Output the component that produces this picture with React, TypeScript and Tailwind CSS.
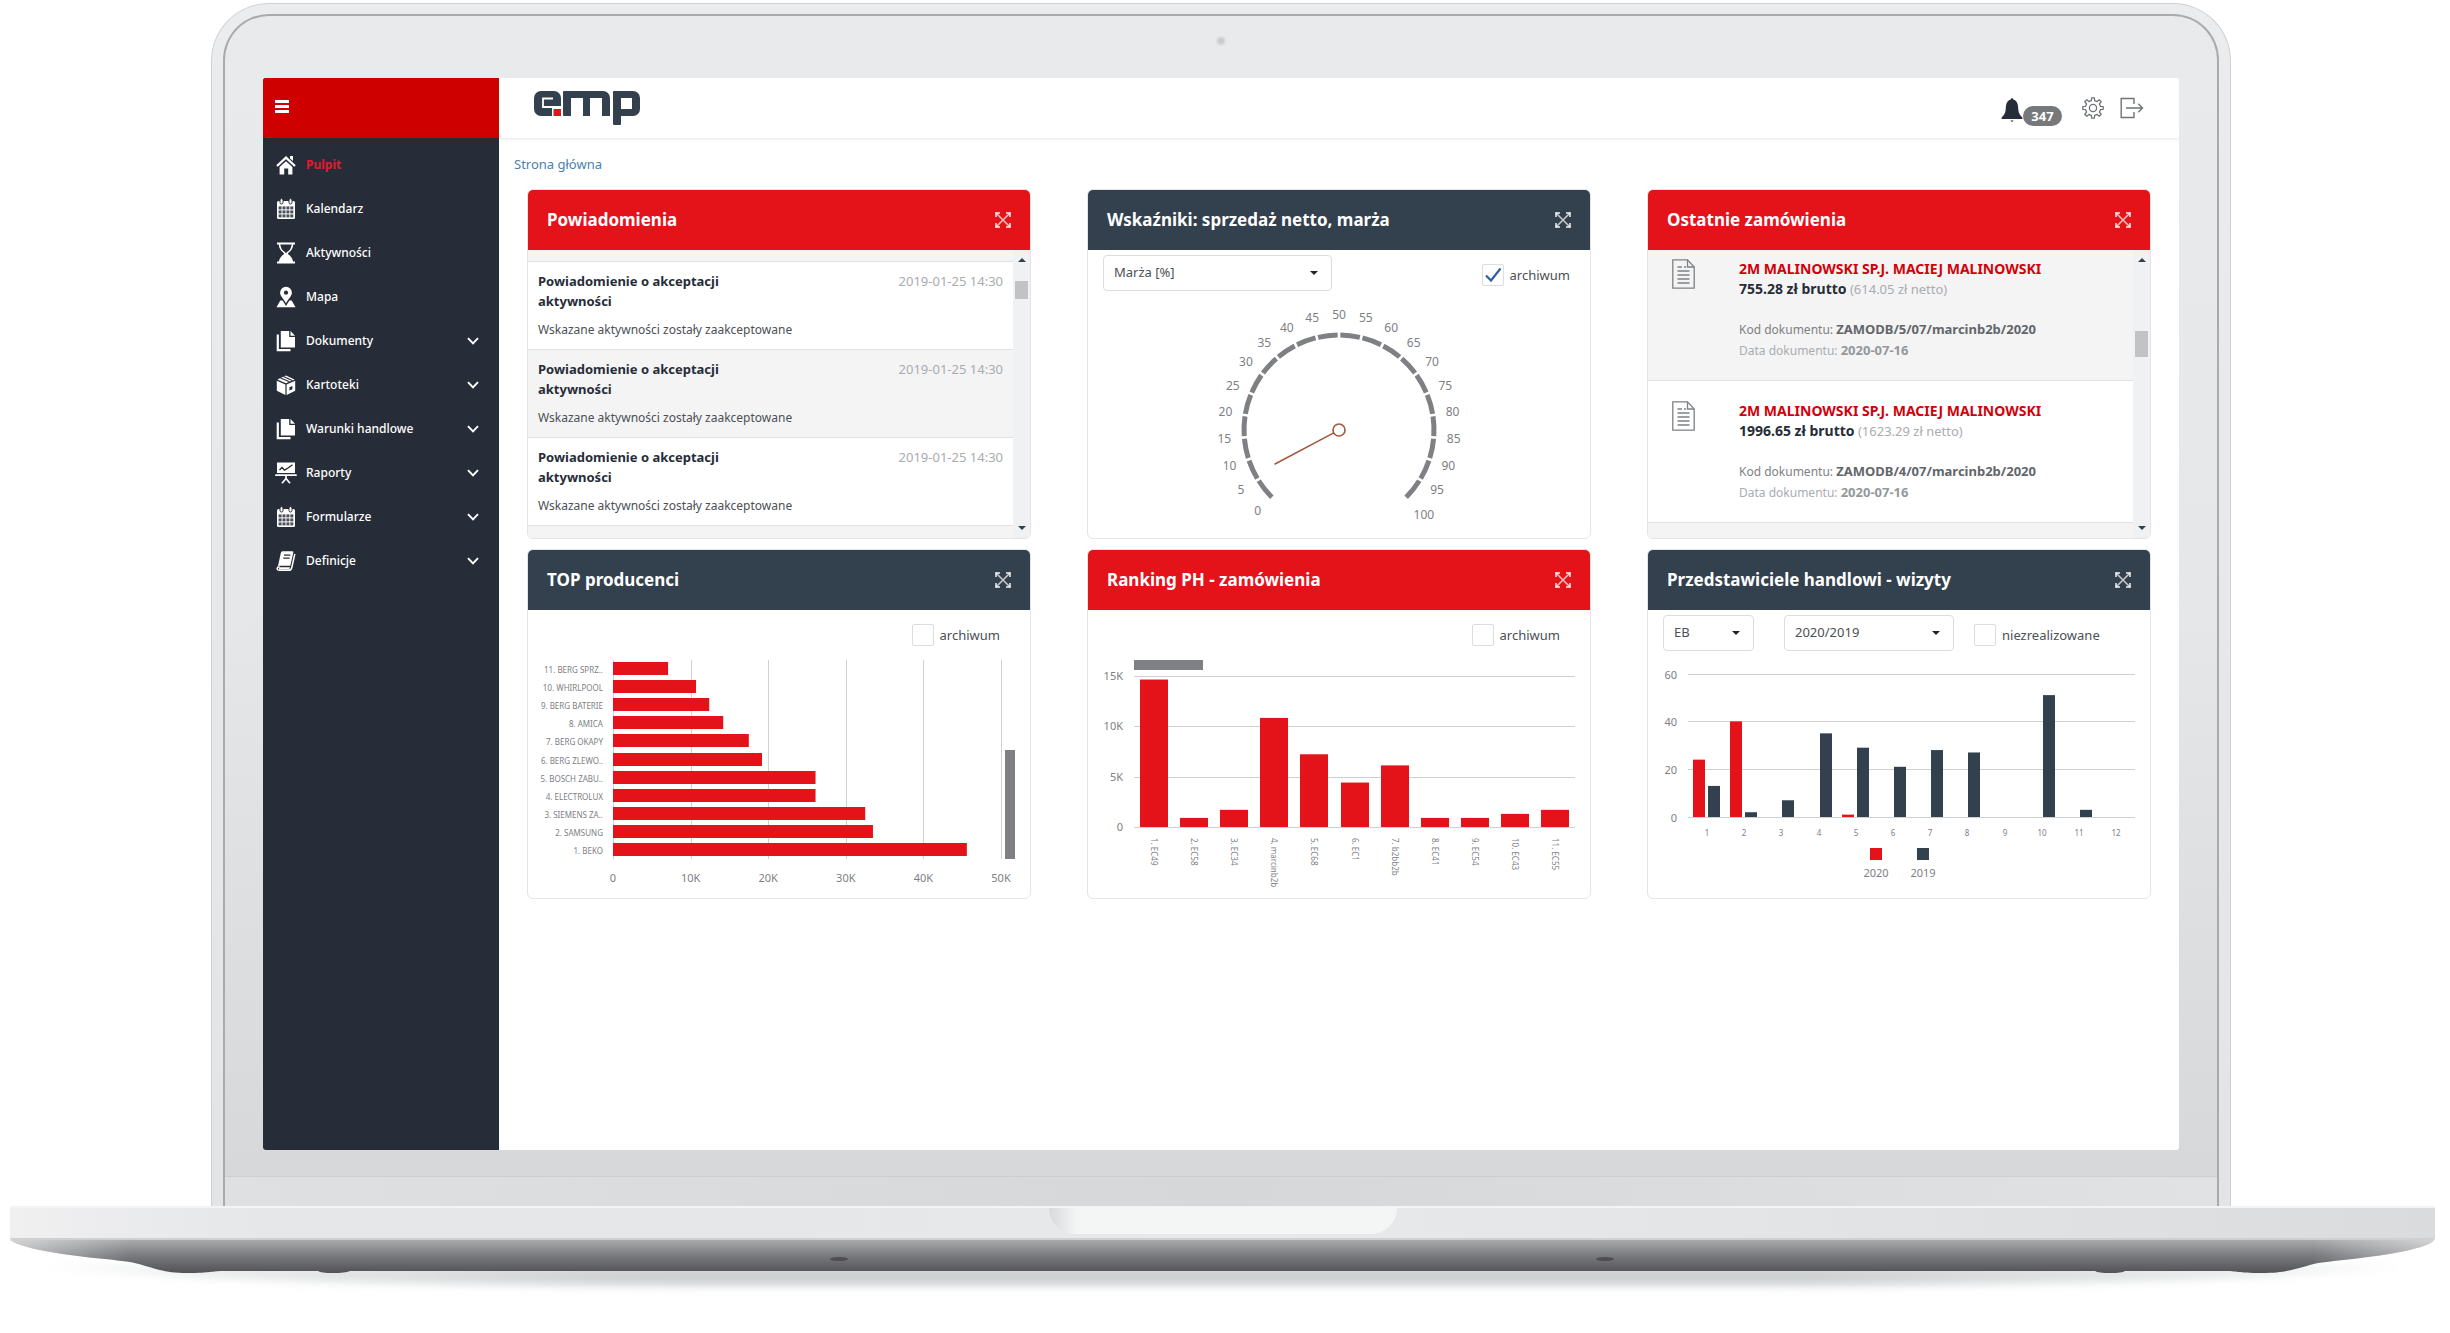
import React, { useState } from "react";

/* ---------- icons ---------- */

function HomeIcon() {
  return (
    <svg viewBox="0 0 20 20" className="size-5" aria-hidden="true">
      <path d="M14 1h3v5l-3-2.6z" fill="#fff" />
      <path d="M1 11L10 2.6L19 11" fill="none" stroke="#fff" strokeWidth="2.2" />
      <path d="M3.6 12L10 6.2L16.4 12V19.5H12.2V13.6H8.2V19.5H3.6Z" fill="#fff" />
    </svg>
  );
}

function CalendarIcon() {
  return (
    <svg viewBox="0 0 20 22" className="h-[22px] w-5" aria-hidden="true">
      <rect x="1" y="3" width="18" height="18" rx="1.5" fill="#fff" />
      <g fill="#fff" stroke="#272d38">
        <rect x="4" y="0.6" width="3" height="5.4" rx="1.5" />
        <rect x="13" y="0.6" width="3" height="5.4" rx="1.5" />
      </g>
      <g fill="#4a505b">
        {[8.4, 12.4, 16.4].map((y) =>
          [2.6, 6.5, 10.4, 14.3].map((x) => <rect key={`${x}-${y}`} x={x} y={y} width="3" height="3" />)
        )}
      </g>
    </svg>
  );
}

function HourglassIcon() {
  return (
    <svg viewBox="0 0 20 22" className="h-[22px] w-5" aria-hidden="true">
      <path d="M1 1.5H19M1 20.5H19" stroke="#fff" strokeWidth="2" />
      <path d="M3.5 2C3.8 7 5.2 8.6 8.2 10.4C9 11 9 11.4 8.2 12M16.5 2C16.2 7 14.8 8.6 11.8 10.4C11 11 11 11.4 11.8 12" fill="none" stroke="#fff" strokeWidth="1.6" />
      <path d="M9 11H11C11.4 12.6 16.4 13.5 17.2 20.5H2.8C3.6 13.5 8.6 12.6 9 11Z" fill="#fff" />
    </svg>
  );
}

function MapPinIcon() {
  return (
    <svg viewBox="0 0 20 22" className="h-[22px] w-5" aria-hidden="true">
      <path fillRule="evenodd" d="M10 .8a5.9 5.9 0 0 1 5.9 5.9C15.9 10 12 13 10 17.4C8 13 4.1 10 4.1 6.7A5.9 5.9 0 0 1 10 .8ZM10 4.6a2.1 2.1 0 1 0 0 4.2a2.1 2.1 0 0 0 0-4.2Z" fill="#fff" />
      <path d="M4.3 14.5L6.6 14.5L10 20L13.4 14.5H15.7L19.5 21.2H.5Z" fill="#fff" />
    </svg>
  );
}

function DocumentsIcon() {
  return (
    <svg viewBox="0 0 20 22" className="h-[22px] w-5" aria-hidden="true">
      <path d="M1.8 4.5V20.2H14.5" fill="none" stroke="#fff" strokeWidth="2.2" />
      <path d="M4.8 1H13.2V7H19V17.6H4.8Z" fill="#fff" />
      <path d="M14.5 1L19 5.7H14.5Z" fill="#fff" />
    </svg>
  );
}

function BoxIcon() {
  return (
    <svg viewBox="0 0 20 22" className="h-[22px] w-5" aria-hidden="true">
      <path d="M.8 6.8L9.4 10.4V21L.8 16.8Z" fill="#fff" />
      <path fillRule="evenodd" d="M10.6 10.4L19.2 6.8V16.8L10.6 21ZM13.4 13.3V16.6L16.4 15.2V12Z" fill="#fff" />
      <path d="M1.4 5.6L10 1.4L18.6 5.6L10 9.2Z" fill="#fff" />
      <path d="M4.6 4L13.5 7.8M7.5 2.6L16.2 6.6" stroke="#272d38" strokeWidth="1.1" />
    </svg>
  );
}

function BoardIcon() {
  return (
    <svg viewBox="0 0 22 22" className="-mx-px h-[22px] w-[22px]" aria-hidden="true">
      <path d="M2 0.5H20V11H2Z" fill="#fff" />
      <path d="M4.5 8L7 5.5L9.5 8.2L13 6L17.5 2.8" fill="none" stroke="#272d38" strokeWidth="1.4" />
      <path d="M1 13.2H21" stroke="#fff" strokeWidth="1.8" strokeLinecap="round" />
      <path d="M11 13V17.5M11 16.5L7 21.2M11 16.5L15 21.2" stroke="#fff" strokeWidth="1.7" />
    </svg>
  );
}

function BookIcon() {
  return (
    <svg viewBox="0 0 20 22" className="h-[22px] w-5" aria-hidden="true">
      <path d="M6.5 1.2H16.2Q17.6 1.2 17.3 2.6L14.3 15.8H4Q2.3 15.8 1.8 17L4.8 3Q5.2 1.2 6.5 1.2Z" fill="#fff" />
      <path d="M18.8 4L15.8 17.5Q15.2 20.3 13 20.3H3.5Q1 20.3 1.2 18.2Q1.5 16.8 3.5 16.8" fill="none" stroke="#fff" strokeWidth="1.5" />
      <path d="M3 17.2H14L13.3 19.5H3Z" fill="#fff" />
      <path d="M8 5.2H14.4M7.3 8.2H13.7" stroke="#272d38" strokeWidth="1.2" />
    </svg>
  );
}

function ChevronIcon() {
  return (
    <svg viewBox="0 0 12 8" className="h-2 w-3" aria-hidden="true">
      <path d="M1 1.2L6 6.4L11 1.2" fill="none" stroke="#fff" strokeWidth="1.9" />
    </svg>
  );
}

function ExpandIcon() {
  return (
    <svg viewBox="0 0 16 16" className="size-4" aria-hidden="true">
      <path d="M1 1L15 15M15 1L1 15" stroke="currentColor" strokeWidth="1.6" />
      <path d="M1 5V1H5M11 1H15V5M15 11V15H11M5 15H1V11" fill="none" stroke="currentColor" strokeWidth="2" />
    </svg>
  );
}

function BellIcon() {
  return (
    <svg viewBox="0 0 22 24" className="h-6 w-[22px]" aria-hidden="true">
      <path d="M11 0Q12 0 12.3 1.5C16.2 2.8 17 6 17.2 10C17.4 14.5 18.4 16.5 21.5 19.8Q22 21 20.5 21H1.5Q0 21 .5 19.8C3.6 16.5 4.6 14.5 4.8 10C5 6 5.800 2.8 9.7 1.5Q10 0 11 0Z" fill="#272d38" />
      <path d="M9.3 22.4H12.7L11 24Z" fill="#272d38" />
    </svg>
  );
}

function gearOutline(teeth: number, inner: number, outer: number, c: number) {
  const step = (2 * Math.PI) / teeth;
  const at = (r: number, a: number) => `${(c + r * Math.cos(a)).toFixed(2)} ${(c + r * Math.sin(a)).toFixed(2)}`;
  const points: string[] = [];
  for (let i = 0; i < teeth; i++) {
    const a = i * step - Math.PI / 2;
    points.push(at(inner, a - step * 0.28), at(outer, a - step * 0.17), at(outer, a + step * 0.17), at(inner, a + step * 0.28));
  }
  return `M${points.join("L")}Z`;
}

function GearIcon() {
  return (
    <svg viewBox="0 0 22 22" className="size-[22px]" fill="none" stroke="#6f7377" strokeWidth="1.3" strokeLinejoin="round" aria-hidden="true">
      <path d={gearOutline(8, 7.6, 10.3, 11)} />
      <circle cx="11" cy="11" r="3.6" />
    </svg>
  );
}

function LogoutIcon() {
  return (
    <svg viewBox="0 0 24 22" className="h-[22px] w-6" fill="none" stroke="#6f7377" strokeWidth="1.4" aria-hidden="true">
      <path d="M14 7V1.5H1.2V20.5H14V15" />
      <path d="M6 11H22.5M18.3 6.8L22.5 11L18.3 15.2" />
    </svg>
  );
}

function DocumentIcon() {
  return (
    <svg viewBox="0 0 23 30" className="h-[30px] w-[23px]" fill="none" stroke="#7d8084" strokeWidth="1.3" aria-hidden="true">
      <path d="M.8 .8H15.5L22.2 8V29.2H.8Z" />
      <path d="M15.5 .8V8H22.2" />
      <path d="M5.5 8H10M12 8H14M5.5 12H17.5M5.5 16H17.5M5.5 20H17.5M5.5 24H17.5" />
    </svg>
  );
}

function Logo() {
  return (
    <svg viewBox="0 0 106 34" className="h-[34px] w-[106px]" role="img" aria-label="emp">
      <g fill="#33404e">
        <rect width="27" height="25" rx="7" />
        <rect x="29" width="47" height="25" rx="7" />
        <rect x="29" width="8" height="25" rx="1" />
        <rect x="68" y="12" width="8" height="13" />
        <rect x="79" width="27" height="25" rx="7" />
        <rect x="79" width="8" height="34" rx="1" />
      </g>
      <g fill="#fff">
        <rect x="37" y="7" width="12" height="18" />
        <rect x="56" y="7" width="12" height="18" />
        <rect x="87" y="7" width="11" height="11" />
        <rect x="18" y="16" width="10" height="9" />
      </g>
      <path d="M19 7.5H9V16H27" fill="none" stroke="#fff" strokeWidth="1.8" />
      <rect x="19.5" y="18" width="7.5" height="7" fill="#e4131a" />
    </svg>
  );
}

/* ---------- form controls ---------- */

function CheckBox({ label, defaultChecked = false }: { label: string; defaultChecked?: boolean }) {
  return (
    <label className="flex items-center gap-1.5 text-[13px] leading-5 text-[#4b5056]">
      <span className="relative flex">
        <input type="checkbox" defaultChecked={defaultChecked} className="peer size-[22px] appearance-none rounded-xs border border-[#dcdddf] bg-white" />
        <svg viewBox="0 0 22 22" className="pointer-events-none absolute inset-0 hidden size-[22px] peer-checked:block" aria-hidden="true">
          <path d="M4 11.5L9 16.5L18.5 4.5" fill="none" stroke="#2f62a3" strokeWidth="2.2" />
        </svg>
      </span>
      {label}
    </label>
  );
}

function Select({ label, options, className }: { label: string; options: string[]; className: string }) {
  return (
    <span className={`relative flex ${className}`}>
      <select aria-label={label} className="h-9 w-full appearance-none rounded-sm border border-[#dcdddf] bg-white pr-8 pl-2.5 text-[13px] text-[#4b5056]">
        {options.map((o) => (
          <option key={o}>{o}</option>
        ))}
      </select>
      <svg viewBox="0 0 8 4" className="pointer-events-none absolute top-4 right-3.5 h-1 w-2" aria-hidden="true">
        <path d="M0 0H8L4 4Z" fill="#1f242c" />
      </svg>
    </span>
  );
}

/* ---------- cards ---------- */

function Card({ title, tone, children }: { title: string; tone: "red" | "navy"; children: React.ReactNode }) {
  return (
    <section className="flex h-[350px] flex-col overflow-hidden rounded-md border border-[#e3e4e6] bg-white">
      <header className={`-mx-px -mt-px flex h-[61px] shrink-0 items-center justify-between pr-5 pl-5 text-white ${tone === "red" ? "bg-[#e4131a]" : "bg-[#33404e]"}`}>
        <h2 className="text-[17px] leading-6 font-bold">{title}</h2>
        <button type="button" aria-label={`Powiększ: ${title}`} className="text-white/70">
          <ExpandIcon />
        </button>
      </header>
      {children}
    </section>
  );
}

function ScrollTrack({ thumb }: { thumb: string }) {
  return (
    <div className="flex w-[17px] shrink-0 flex-col items-center bg-[#f0f1f2] py-2" aria-hidden="true">
      <svg viewBox="0 0 8 4" className="h-1 w-2"><path d="M4 0L8 4H0Z" fill="#33404e" /></svg>
      <div className={`w-[13px] bg-[#c2c3c5] ${thumb}`} />
      <svg viewBox="0 0 8 4" className="mt-auto h-1 w-2"><path d="M0 0H8L4 4Z" fill="#33404e" /></svg>
    </div>
  );
}

function Notifications() {
  return (
    <div className="flex min-h-0 flex-1">
      <div className="flex flex-1 flex-col bg-[#f4f4f4] pt-[11px]">
        <ul>
          {[0, 1, 2].map((i) => (
            <li key={i} className={`h-[88px] border-t border-[#dfe0e1] px-2.5 pt-[9px] ${i % 2 ? "bg-[#f4f4f4]" : "bg-white"}`}>
              <div className="flex items-start justify-between leading-5">
                <h3 className="w-[230px] text-[13px] leading-5 font-bold text-[#272d38]">Powiadomienie o akceptacji aktywności</h3>
                <time className="text-[13px] text-[#a9acb0]">2019-01-25 14:30</time>
              </div>
              <p className="mt-[9px] text-xs leading-5 text-[#4b5056]">Wskazane aktywności zostały zaakceptowane</p>
            </li>
          ))}
        </ul>
        <div className="flex-1 border-t border-[#dfe0e1]" />
      </div>
      <ScrollTrack thumb="mt-[19px] h-[18px]" />
    </div>
  );
}

const orders = [
  { gross: "755.28", net: "614.05", code: "ZAMODB/5/07/marcinb2b/2020" },
  { gross: "1996.65", net: "1623.29", code: "ZAMODB/4/07/marcinb2b/2020" },
];

function Orders() {
  return (
    <div className="flex min-h-0 flex-1">
      <div className="flex flex-1 flex-col overflow-hidden bg-[#f4f4f4]">
        <ul className="-mt-[11px] shrink-0">
          {orders.map((o, i) => (
            <li key={o.code} className={`flex h-[142px] items-start border-b border-[#dfe0e1] pt-5 pl-6 ${i % 2 ? "bg-white" : "bg-[#f4f4f4]"}`}>
              <DocumentIcon />
              <div className="ml-11 text-xs leading-5">
                <p className="text-sm leading-5 font-bold text-[#d3000a]">2M MALINOWSKI SP.J. MACIEJ MALINOWSKI</p>
                <p className="text-[13px] leading-5 text-[#a9acb0]">
                  <b className="text-sm leading-5 text-[#272d38]">{o.gross} zł brutto</b> ({o.net} zł netto)
                </p>
                <p className="mt-5 text-[#7d8084]">Kod dokumentu: <b className="text-[13px] leading-5 text-[#62666b]">{o.code}</b></p>
                <p className="text-[#a9acb0]">Data dokumentu: <b className="text-[13px] leading-5 text-[#94989c]">2020-07-16</b></p>
              </div>
            </li>
          ))}
        </ul>
      </div>
      <ScrollTrack thumb="mt-[69px] h-[26px]" />
    </div>
  );
}

function Gauge() {
  const cx = 251;
  const cy = 139;
  const point = (value: number, r: number) => {
    const a = ((135 + value * 2.7) * Math.PI) / 180;
    return [cx + r * Math.cos(a), cy + r * Math.sin(a)];
  };
  const segments = Array.from({ length: 20 }, (_, i) => i * 5);
  const [nx, ny] = point(6.3, 73);
  const [sx, sy] = point(6.3, 6);
  return (
    <svg viewBox="0 0 502 247" className="w-full" role="img" aria-label="Marża [%]">
      {segments.map((v) => {
        const [x1, y1] = point(v === 0 ? 0 : v + 0.3, 95);
        const [x2, y2] = point(v === 95 ? 100 : v + 4.7, 95);
        return <path key={v} d={`M${x1} ${y1}A95 95 0 0 1 ${x2} ${y2}`} fill="none" stroke="#7f8084" strokeWidth="5" />;
      })}
      <g fontSize="12" fill="#7d8084" textAnchor="middle">
        {[...segments, 100].map((v) => {
          const [x, y] = point(v, v === 100 ? 120 : 115);
          return <text key={v} x={x} y={y + 4}>{v}</text>;
        })}
      </g>
      <path d={`M${sx} ${sy}L${nx} ${ny}`} stroke="#a5563b" strokeWidth="1.5" />
      <circle cx={cx} cy={cy} r="6" fill="#fff" stroke="#a5563b" strokeWidth="1.6" />
    </svg>
  );
}

const producers: [string, number][] = [
  ["11. BERG SPRZ..", 7.1],
  ["10. WHIRLPOOL", 10.7],
  ["9. BERG BATERIE", 12.4],
  ["8. AMICA", 14.2],
  ["7. BERG OKAPY", 17.5],
  ["6. BERG ZLEWO..", 19.2],
  ["5. BOSCH ZABU..", 26.1],
  ["4. ELECTROLUX", 26.1],
  ["3. SIEMENS ZA..", 32.5],
  ["2. SAMSUNG", 33.5],
  ["1. BEKO", 45.6],
];

function ProducersChart() {
  return (
    <svg viewBox="0 0 502 247" className="w-full" role="img" aria-label="TOP producenci">
      {[0, 10, 20, 30, 40, 50].map((v) => (
        <g key={v}>
          <rect x={Math.round(85 + v * 7.76)} y="9" width="1" height="199" fill="#cfd0d2" />
          <text x={85 + v * 7.76} y="231" fontSize="11" fill="#7d8084" textAnchor="middle">{v === 0 ? "0" : `${v}K`}</text>
        </g>
      ))}
      {producers.map(([name, v], i) => (
        <g key={name}>
          <rect x="85" y={Math.round(11 + i * 18.1)} width={v * 7.76} height="13" fill="#e4131a" />
          <text x="75" y={Math.round(22 + i * 18.1)} fontSize="8" fill="#7d8084" textAnchor="end">{name}</text>
        </g>
      ))}
      <rect x="477" y="99" width="10" height="109" fill="#7f8084" />
    </svg>
  );
}

const ranking: [string, number][] = [
  ["1. EC49", 14.6],
  ["2. EC58", 0.9],
  ["3. EC34", 1.7],
  ["4. marcinb2b", 10.8],
  ["5. EC68", 7.2],
  ["6. EC1", 4.4],
  ["7. b2bb2b", 6.1],
  ["8. EC41", 0.9],
  ["9. EC54", 0.9],
  ["10. EC43", 1.3],
  ["11. EC55", 1.7],
];

function RankingChart() {
  return (
    <svg viewBox="0 0 502 247" className="w-full" role="img" aria-label="Ranking PH - zamówienia">
      {[0, 5, 10, 15].map((v) => (
        <g key={v}>
          <rect x="46" y={Math.round(176 - v * 10.1)} width="441" height="1" fill="#cfd0d2" />
          <text x="35" y={Math.round(180 - v * 10.1)} fontSize="11" fill="#7d8084" textAnchor="end">{v === 0 ? "0" : `${v}K`}</text>
        </g>
      ))}
      <rect x="46" y="9" width="69" height="10" fill="#7f8084" />
      {ranking.map(([name, v], i) => {
        const x = Math.round(52 + i * 40.1);
        return (
          <g key={name}>
            <rect x={x} y={176 - v * 10.1} width="28" height={v * 10.1} fill="#e4131a" />
            <text transform={`translate(${x + 11} 187) rotate(90)`} fontSize="8" fill="#7d8084">{name}</text>
          </g>
        );
      })}
    </svg>
  );
}

const visits: [number, number][] = [
  [24, 13], [40, 2], [0, 7], [0, 35], [1, 29], [0, 21], [0, 28], [0, 27], [0, 0], [0, 51], [0, 3], [0, 0],
];

function VisitsChart() {
  return (
    <svg viewBox="0 0 502 247" className="w-full" role="img" aria-label="Przedstawiciele handlowi - wizyty">
      {[0, 20, 40, 60].map((v) => (
        <g key={v}>
          <rect x="40" y={Math.round(166 - v * 2.39)} width="447" height="1" fill="#cfd0d2" />
          <text x="29" y={Math.round(171 - v * 2.39)} fontSize="11" fill="#7d8084" textAnchor="end">{v}</text>
        </g>
      ))}
      {visits.map(([current, previous], i) => {
        const x = Math.round(45 + i * 37.2);
        return (
          <g key={i}>
            <rect x={x} y={166 - current * 2.39} width="12" height={current * 2.39} fill="#e4131a" />
            <rect x={x + 15} y={166 - previous * 2.39} width="12" height={previous * 2.39} fill="#33404e" />
            <text x={x + 14} y="185" fontSize="8" fill="#7d8084" textAnchor="middle">{i + 1}</text>
          </g>
        );
      })}
      <rect x="222" y="197" width="12" height="12" fill="#e4131a" />
      <rect x="269" y="197" width="12" height="12" fill="#33404e" />
      <g fontSize="11" fill="#7d8084" textAnchor="middle">
        <text x="228" y="226">2020</text>
        <text x="275" y="226">2019</text>
      </g>
    </svg>
  );
}

/* ---------- application ---------- */

const menu = [
  { label: "Pulpit", icon: <HomeIcon />, active: true },
  { label: "Kalendarz", icon: <CalendarIcon /> },
  { label: "Aktywności", icon: <HourglassIcon /> },
  { label: "Mapa", icon: <MapPinIcon /> },
  { label: "Dokumenty", icon: <DocumentsIcon />, more: true },
  { label: "Kartoteki", icon: <BoxIcon />, more: true },
  { label: "Warunki handlowe", icon: <DocumentsIcon />, more: true },
  { label: "Raporty", icon: <BoardIcon />, more: true },
  { label: "Formularze", icon: <CalendarIcon />, more: true },
  { label: "Definicje", icon: <BookIcon />, more: true },
];

function Sidebar({ open, onToggle }: { open: boolean; onToggle: () => void }) {
  return (
    <aside className={`flex shrink-0 flex-col bg-[#272d38] ${open ? "w-[236px]" : "w-12"}`}>
      <div className="flex h-[60px] items-center bg-[#cf0000] pb-1 pl-3">
        <button type="button" aria-label="Menu" onClick={onToggle} className="flex w-3.5 flex-col gap-0.5">
          <span className="h-[3px] bg-white" />
          <span className="h-[3px] bg-white" />
          <span className="h-[3px] bg-white" />
        </button>
      </div>
      <nav className="pt-[5px]">
        <ul>
          {menu.map((m) => (
            <li key={m.label}>
              <a href="#" className={`flex h-11 items-center gap-2.5 pr-5 pl-[13px] text-xs ${m.active ? "font-bold text-[#e01b30]" : "font-medium text-white"}`}>
                {m.icon}
                {open && <span className="flex-1">{m.label}</span>}
                {open && m.more && <ChevronIcon />}
              </a>
            </li>
          ))}
        </ul>
      </nav>
    </aside>
  );
}

function Dashboard() {
  const [open, setOpen] = useState(true);
  return (
    <div className="flex flex-1 overflow-hidden rounded-[3px] bg-white">
      <Sidebar open={open} onToggle={() => setOpen(!open)} />
      <div className="flex min-w-0 flex-1 flex-col">
        <header className="flex h-[61px] items-center justify-between border-b border-[#ececee] pr-[35px] pl-[35px] shadow-[0_1px_3px_#0000000d]">
          <Logo />
          <div className="flex items-center">
            <button type="button" aria-label="Powiadomienia: 347" className="flex items-start pt-2">
              <BellIcon />
              <span className="mt-2 flex h-5 w-[39px] items-center justify-center rounded-full bg-[#77787c] text-[13px] leading-5 font-bold text-white">347</span>
            </button>
            <button type="button" aria-label="Ustawienia" className="ml-5"><GearIcon /></button>
            <button type="button" aria-label="Wyloguj" className="ml-4"><LogoutIcon /></button>
          </div>
        </header>
        <main>
          <nav aria-label="Ścieżka" className="flex h-[50px] items-center px-[15px] pt-0.5 text-[13px]">
            <a href="#" className="text-[#4a7fb0]">Strona główna</a>
          </nav>
          <div className="grid grid-cols-3 gap-x-14 gap-y-2.5 px-7 pb-8">
            <Card title="Powiadomienia" tone="red"><Notifications /></Card>
            <Card title="Wskaźniki: sprzedaż netto, marża" tone="navy">
              <div className="flex h-[41px] shrink-0 items-end justify-between pr-5 pl-[15px]">
                <Select label="Wskaźnik" options={["Marża [%]", "Sprzedaż netto"]} className="w-[229px]" />
                <div className="pb-[5px]"><CheckBox label="archiwum" defaultChecked /></div>
              </div>
              <Gauge />
            </Card>
            <Card title="Ostatnie zamówienia" tone="red"><Orders /></Card>
            <Card title="TOP producenci" tone="navy">
              <div className="flex h-[41px] shrink-0 items-end justify-end pr-[30px] pb-[5px]"><CheckBox label="archiwum" /></div>
              <ProducersChart />
            </Card>
            <Card title="Ranking PH - zamówienia" tone="red">
              <div className="flex h-[41px] shrink-0 items-end justify-end pr-[30px] pb-[5px]"><CheckBox label="archiwum" /></div>
              <RankingChart />
            </Card>
            <Card title="Przedstawiciele handlowi - wizyty" tone="navy">
              <div className="flex h-[41px] shrink-0 items-end pl-[15px]">
                <Select label="Przedstawiciel" options={["EB"]} className="w-[91px]" />
                <Select label="Lata" options={["2020/2019"]} className="ml-[30px] w-[170px]" />
                <div className="ml-5 pb-[5px]"><CheckBox label="niezrealizowane" /></div>
              </div>
              <VisitsChart />
            </Card>
          </div>
        </main>
      </div>
    </div>
  );
}

/* ---------- laptop ---------- */

function LaptopBase() {
  return (
    <div>
      <div className="mr-[15px] ml-2.5 flex h-[34px] justify-center rounded-xs border-t-2 border-b-2 border-t-[#f3f4f5] border-b-[#cfd0d1] bg-linear-to-r from-[#f0f0f1] via-[#e6e7e9] via-10% to-[#d9dbdd]">
        <div className="flex w-full justify-center bg-linear-to-r from-transparent via-[#e8e9eb] to-transparent">
          <div className="h-[26px] w-[348px] rounded-b-[26px] bg-linear-to-r from-[#d8d9db] via-[#f4f5f5] via-8% to-[#f4f5f5]" />
        </div>
      </div>
      <svg viewBox="0 0 2450 93" preserveAspectRatio="none" className="h-[93px] w-full" aria-hidden="true">
        <defs>
          <linearGradient id="belly" x1="0" y1="0" x2="0" y2="1">
            <stop offset="0" stopColor="#a9aaab" />
            <stop offset="0.45" stopColor="#7b7c80" />
            <stop offset="1" stopColor="#515156" />
          </linearGradient>
          <linearGradient id="bellyEdge" x1="0" y1="0" x2="1" y2="0">
            <stop offset="0" stopColor="#fff" stopOpacity="0.5" />
            <stop offset="0.05" stopColor="#fff" stopOpacity="0" />
            <stop offset="0.95" stopColor="#fff" stopOpacity="0" />
            <stop offset="1" stopColor="#fff" stopOpacity="0.5" />
          </linearGradient>
          <linearGradient id="floor" x1="0" y1="0" x2="1" y2="0">
            <stop offset="0" stopColor="#cfd1d3" stopOpacity="0.2" />
            <stop offset="0.25" stopColor="#cfd1d3" />
            <stop offset="0.75" stopColor="#cfd1d3" />
            <stop offset="1" stopColor="#cfd1d3" stopOpacity="0.2" />
          </linearGradient>
          <filter id="soften" x="-5%" y="-50%" width="110%" height="200%">
            <feGaussianBlur stdDeviation="10 4" />
          </filter>
        </defs>
        <path d="M40 26H2410L2250 38Q2050 46 1700 46H750Q400 46 200 38Z" fill="url(#floor)" filter="url(#soften)" />
        <path
          d="M10 0H2434Q2432 5 2405 11C2370 18 2340 20 2318 23C2300 27 2290 33 2262 33C2235 33 2240 31 2222 31H2125Q2122 33 2110 33T2095 31H350Q345 33 333 33T318 31H225C210 31 212 33 187 33C160 33 150 26 130 22C110 19 75 17 45 11Q18 6 10 0Z"
          fill="url(#belly)"
        />
        <path d="M10 0H2434Q2432 5 2405 11C2370 18 2340 20 2318 23L2222 31H225L130 22C110 19 75 17 45 11Q18 6 10 0Z" fill="url(#bellyEdge)" />
        <ellipse cx="839" cy="19" rx="9" ry="2" fill="#4d4d52" />
        <ellipse cx="1605" cy="19" rx="9" ry="2" fill="#4d4d52" />
      </svg>
    </div>
  );
}

export default function App() {
  return (
    <div className="flex min-h-screen flex-col bg-white pt-[3px] font-['Noto_Sans',sans-serif]">
      <div className="mr-[219px] ml-[211px] flex flex-1 flex-col rounded-t-[58px] border border-b-0 border-[#cfd0d2] bg-linear-to-b from-[#ebecee] to-[#e3e4e6] px-[11px] pt-2.5">
        <div className="flex flex-1 flex-col rounded-t-[46px] border-2 border-b-0 border-[#a9aaad] bg-linear-to-b from-[#e9eaec] via-[#e6e7e9] to-[#d6d7d9]">
          <div className="flex h-[62px] items-center justify-center pb-3">
            <span className="size-2.5 rounded-full border-2 border-[#dcdddf] bg-[#cbccce]" />
          </div>
          <div className="flex flex-1 px-[38px]">
            <Dashboard />
          </div>
          <div className="mt-[26px] h-[30px] border-t border-[#cdcecf] bg-linear-to-r from-[#dfe0e2] via-[#d6d7d9] to-[#e1e2e4]" />
        </div>
      </div>
      <LaptopBase />
    </div>
  );
}
